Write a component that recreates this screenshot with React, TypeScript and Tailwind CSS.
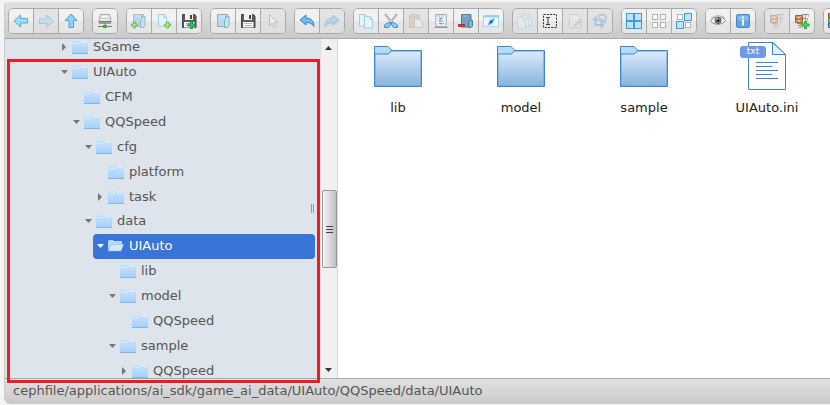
import type { ReactNode } from "react";

const Svg = ({ children }: { children: ReactNode }) => (
  <svg width="16" height="16" viewBox="0 0 16 16" fill="none" aria-hidden="true">
    {children}
  </svg>
);

const Plus = ({ x, y }: { x: number; y: number }) => (
  <path
    transform={`translate(${x} ${y})`}
    d="M2.500.500h2v2h2v2h-2v2h-2v-2h-2v-2h2z"
    fill="#b4e69c"
    stroke="#6cbb52"
  />
);

const Page = ({ x, y }: { x: number; y: number }) => (
  <path
    transform={`translate(${x} ${y})`}
    d="M.5.500h5.500l2.500 3v8.500h-8zM6 .5v3h2.500"
    fill="#e6f4fb"
    stroke="#a6cde0"
  />
);

const BookFolder = ({ light }: { light?: boolean }) => (
  <g>
    <path d="M2.500 1.500h10v12h-10z" fill={light ? "#b9dbee" : "#b9d6e4"} stroke={light ? "#7db4d2" : "#9cc1d3"} />
    <path d="M9.500 7.500l1-1V3.500h3.500v9l-1.500 2h-3z" fill={light ? "#c9e6f5" : "#c6dfea"} stroke={light ? "#74aecd" : "#8fb9cf"} />
    <path d="M4 3h5v3" stroke="#d9edf7" />
  </g>
);

const Floppy = () => (
  <g>
    <path d="M1.500 1.500h12l1.500 1.500v11.500h-13.500z" fill="#5b5b5b" stroke="#444" />
    <path d="M4 1h8v6H4z" fill="#f1f1f1" />
    <path d="M9 2h2v4H9z" fill="#444" />
    <path d="M3 9h10.500v5.500H3z" fill="#fafafa" />
    <path d="M4.500 10.500h7.500M4.500 12.500h7.500" stroke="#b5b5b5" />
  </g>
);

const Drawer = () => (
  <g>
    <path d="M1.500 2.500h7v7h-7z" fill="#d99a5f" stroke="#9a6335" />
    <path d="M2 6h6" stroke="#9a6335" />
    <path d="M4 4.500h2M4 8h2" stroke="#fff0d0" />
    <path d="M8 1.500h7M9 5.500h5M4 12.500h6M3 10.500h6" stroke="#8f8a80" />
    <path d="M11.500 2v9M6.500 11v3" stroke="#aca69b" />
    <path d="M14.500 1v3M13.500 5v3M4 14.500h5" stroke="#b9b4aa" />
  </g>
);

const Square = ({ x, y, on }: { x: number; y: number; on?: boolean }) => (
  <rect
    x={x}
    y={y}
    width={on ? 7 : 5}
    height={on ? 7 : 5}
    fill={on ? "#bfe3fb" : "#fff"}
    stroke={on ? "#3c9ce6" : "#b3b3b3"}
  />
);

const arrow = "M1 8l6.500-6v3.500H14.500v4.500H7.500v4z";

const icons: Record<string, ReactNode> = {
  Back: <path d={arrow} fill="#9fdcfb" stroke="#5aa9e0" />,
  Forward: <path d={arrow} transform="rotate(180 8 8)" fill="#9fdcfb" stroke="#4a9fdc" />,
  Up: <path d={arrow} transform="rotate(90 8 8)" fill="#8fd3fb" stroke="#4ba0e0" />,
  "Network volume": (
    <g>
      <path d="M3.500 1.500h9l1.500 6v2.500h-12V7.500z" fill="#e6e6e6" stroke="#a3a3a3" />
      <path d="M4 3.500h8" stroke="#f8f8f8" />
      <path d="M3.500 5.500h9" stroke="#cfcfcf" />
      <path d="M2 8.500h12M2 10h12" stroke="#777" />
      <path d="M8 10v3M1 13.500h14" stroke="#7a7a7a" />
      <path d="M6.500 12.500h3v2h-3z" fill="#58d046" stroke="#2f9a25" />
    </g>
  ),
  "New folder": (
    <g>
      <BookFolder />
      <Plus x={0} y={8.5} />
    </g>
  ),
  "New file": (
    <g>
      <Page x={2} y={1} />
      <Plus x={8} y={8.5} />
    </g>
  ),
  Upload: (
    <g>
      <Floppy />
      <path d="M9.500 8.500h2v2.500H14v2h-2.500v2.500h-2V13H7v-2h2.500z" fill="#35c465" stroke="#159545" />
    </g>
  ),
  Open: <BookFolder light />,
  Download: <Floppy />,
  "Get link": <path d="M4.500 1.500v11l2.500-2.500 2 4.500 2-1-2-4h3.500z" fill="#fff" stroke="#8b8b8b" />,
  Undo: <path d="M1 7l6-5v3c5 0 8 3 8 8.500-2-3-4-4-8-4V12z" fill="#6fbcf0" stroke="#2f82c8" />,
  Redo: <path d="M15 7L9 2v3c-5 0-8 3-8 8.500 2-3 4-4 8-4V12z" fill="#7cc4ee" stroke="#3d8dc0" />,
  Copy: (
    <g>
      <Page x={1} y={1} />
      <Page x={6} y={3} />
    </g>
  ),
  Cut: (
    <g>
      <path d="M2 1l8 10M14 1L6 11" stroke="#8d9398" strokeWidth="2" />
      <path d="M2 1l7 8M14 1L7 9" stroke="#d3d8dc" />
      <path d="M7.500 9.500l-3 .5-3 2v2.500h4l2-3zM8.500 9.500l3 .5 3 2v2.500h-4l-2-3z" fill="#92ccf4" stroke="#3b90d4" />
    </g>
  ),
  Paste: (
    <g>
      <path d="M1.500 2.500h10v12h-10z" fill="#e0b084" stroke="#c08d5c" />
      <path d="M4 1.500h5v2H4z" fill="#d4d4d4" stroke="#9c9c9c" />
      <path d="M6.500 6.500h5l3 3v5h-8z" fill="#f8f8f8" stroke="#a4a4a4" />
    </g>
  ),
  "Empty the folder": (
    <g>
      <path d="M2.500 1.500h11l-.5 12H3z" fill="#edf2f6" stroke="#a5adb3" />
      <path d="M1 14.500h14" stroke="#9c9c9c" />
      <path d="M4 3h8" stroke="#8a9299" strokeDasharray="1 1" />
      <path d="M6 5.500h3l-1-1M10 8H6l1.500-1.500M6 10.500h3l-1 1M10 10l1 1" stroke="#5598dc" />
    </g>
  ),
  Delete: (
    <g>
      <path d="M3.500 1.500h9.500v12.500h-9.500z" fill="#74a3c1" stroke="#527f9b" />
      <path d="M10.500 8.500l1-1h3v5.500l-1.500 1.500h-2.500z" fill="#8ab2cb" stroke="#4d7995" />
      <path d="M5 3h4" stroke="#9dc2d8" />
      <path d="M.5 11.500h6v2h-6z" fill="#df4545" stroke="#b8262e" />
    </g>
  ),
  Hide: (
    <g>
      <path d="M.5 2.500h15v11H.5z" fill="#eef7fd" stroke="#a8d4f3" />
      <path d="M1 3.500h14" stroke="#98cdf3" strokeWidth="2" />
      <circle cx="8" cy="9" r="3.500" fill="#d3eafa" />
      <path d="M12 5L9.500 10 4.500 12.500l2.500-5z" fill="#4a97da" />
      <path d="M7 8h2v2H7z" fill="#1f5f9c" />
    </g>
  ),
  Duplicate: (
    <g>
      <Page x={6} y={0.5} />
      <Page x={3} y={2} />
      <Page x={0} y={3.5} />
    </g>
  ),
  Rename: (
    <g>
      <path d="M1.500 1.500h13v13h-13z" stroke="#2e2e2e" strokeDasharray="2 1.250" />
      <path d="M4 4.500h1.500l.5.500.5-.5H8M6 5v6M4 11.500h4" stroke="#333" />
    </g>
  ),
  "Edit file": (
    <g>
      <path d="M2.500 1.500h8l3 3v10h-11z" fill="#e7f1f7" stroke="#96b9ca" />
      <path d="M14.500 7l-5 5-2 1 .5-2 5-5z" fill="#f3cf85" stroke="#c59243" />
    </g>
  ),
  "Resize and rotate": (
    <g>
      <path d="M3.500 3.500v8.500H12M.5 6.500h9V15" stroke="#5a9cc8" strokeWidth="2" />
      <path d="M6.500 4.500C7 .5 14 .5 14 5c0 2-1 3-2 3.500" stroke="#62abdf" strokeWidth="2" />
      <path d="M10 6v4.500h4.500z" fill="#62abdf" />
    </g>
  ),
  "Select all": (
    <g>
      <Square x={0.5} y={0.5} on />
      <Square x={8.5} y={0.5} on />
      <Square x={0.5} y={8.5} on />
      <Square x={8.5} y={8.5} on />
    </g>
  ),
  "Select none": (
    <g>
      <Square x={1.5} y={1.5} />
      <Square x={9.5} y={1.5} />
      <Square x={1.5} y={9.5} />
      <Square x={9.5} y={9.5} />
    </g>
  ),
  "Invert selection": (
    <g>
      <Square x={1.5} y={1.5} />
      <Square x={8.5} y={0.5} on />
      <Square x={0.5} y={8.5} on />
      <Square x={9.5} y={9.5} />
    </g>
  ),
  Preview: (
    <g>
      <path d="M.5 8C3 3.500 12 2.500 15.500 7.500 12 12.500 4 12.500.5 8z" fill="#f7f7f7" stroke="#888" />
      <path d="M1 5.500C5 2 11 2 15 5" stroke="#aaa" />
      <circle cx="8" cy="7.500" r="3" fill="#888" stroke="#555" />
      <circle cx="8" cy="7.500" r="1.500" fill="#1c1c1c" />
      <path d="M6 6h2" stroke="#ddd" />
    </g>
  ),
  "Get info": (
    <g>
      <rect x="1.500" y="1.500" width="13" height="13" rx="1.500" fill="#5fa5e0" stroke="#4488c8" />
      <path d="M2.500 2.500h11v5h-11z" fill="#80bbeb" />
      <path d="M7 3.500h2v2H7zM7 6.500h2v6H7z" fill="#fff" />
    </g>
  ),
  "Extract files": <Drawer />,
  "Create archive": (
    <g>
      <Drawer />
      <path d="M10.500 8.500h2V11H15v2h-2.500v2.500h-2V13H8v-2h2.500z" fill="#4fdb55" stroke="#25a935" />
    </g>
  ),
  Sort: (
    <g>
      <path d="M.5.500h9v4h-9z" fill="#e5925c" stroke="#8a4b22" />
      <path d="M.5 5.500h11v4h-11z" fill="#7fd07a" stroke="#3b8f37" />
      <path d="M.5 10.500h13v4h-13z" fill="#6aa5e8" stroke="#2c62a8" />
    </g>
  ),
};

const groups: string[][] = [
  ["Back", "Forward", "Up"],
  ["Network volume"],
  ["New folder", "New file", "Upload"],
  ["Open", "Download", "Get link"],
  ["Undo", "Redo"],
  ["Copy", "Cut", "Paste", "Empty the folder", "Delete", "Hide"],
  ["Duplicate", "Rename", "Edit file", "Resize and rotate"],
  ["Select all", "Select none", "Invert selection"],
  ["Preview", "Get info"],
  ["Extract files", "Create archive"],
  ["Sort"],
];

const disabled = new Set([
  "Forward",
  "Get link",
  "Redo",
  "Paste",
  "Duplicate",
  "Edit file",
  "Resize and rotate",
  "Extract files",
]);

const Toolbar = () => (
  <div
    role="toolbar"
    aria-label="File actions"
    className="flex shrink-0 gap-2 overflow-hidden rounded-tl border-b border-l border-b-[#aaa] border-l-[#ccc] bg-linear-to-b from-[#e1e1e1] to-[#cacaca] pt-1.5 pr-1 pb-1 pl-[3px]"
  >
    {groups.map((group) => (
      <div
        key={group[0]}
        className="flex shrink-0 divide-x divide-[#aaa] overflow-hidden rounded-[5px] border border-[#aaa]"
      >
        {group.map((name) => (
          <button
            key={name}
            type="button"
            title={name}
            aria-label={name}
            disabled={disabled.has(name)}
            className="box-content flex size-6 items-center justify-center bg-linear-to-b from-[#f1f1f1] from-50% to-[#e6e6e6] to-50% disabled:from-[#e3e3e3] disabled:to-[#dfdfdf] disabled:*:opacity-40"
          >
            <Svg>{icons[name]}</Svg>
          </button>
        ))}
      </div>
    ))}
  </div>
);

type Node = {
  name: string;
  pad: string;
  state?: "open" | "closed";
  selected?: boolean;
};

const tree: Node[] = [
  { name: "SGame", pad: "pl-[52px]", state: "closed" },
  { name: "UIAuto", pad: "pl-[52px]", state: "open" },
  { name: "CFM", pad: "pl-[64px]" },
  { name: "QQSpeed", pad: "pl-[64px]", state: "open" },
  { name: "cfg", pad: "pl-[76px]", state: "open" },
  { name: "platform", pad: "pl-[88px]" },
  { name: "task", pad: "pl-[88px]", state: "closed" },
  { name: "data", pad: "pl-[76px]", state: "open" },
  { name: "UIAuto", pad: "pl-[88px]", state: "open", selected: true },
  { name: "lib", pad: "pl-[100px]" },
  { name: "model", pad: "pl-[100px]", state: "open" },
  { name: "QQSpeed", pad: "pl-[112px]" },
  { name: "sample", pad: "pl-[100px]", state: "open" },
  { name: "QQSpeed", pad: "pl-[112px]", state: "closed" },
];

const TreeArrow = ({ state }: { state?: "open" | "closed" }) => (
  <svg width="7" height="8" viewBox="0 0 7 8" className="mr-1 shrink-0" aria-hidden="true">
    {state === "open" && <path d="M0 2h7L3.500 6z" fill="currentColor" />}
    {state === "closed" && <path d="M1 0v8l4-4z" fill="currentColor" />}
  </svg>
);

const TreeFolder = ({ open }: { open?: boolean }) => (
  <svg width="16" height="14" viewBox="0 0 16 14" className="mr-[5px] shrink-0" aria-hidden="true">
    <defs>
      <linearGradient id="leaf" x1="0" y1="0" x2="0" y2="1">
        <stop offset="0" stopColor="#c9e3fc" />
        <stop offset="1" stopColor="#a5d0f8" />
      </linearGradient>
    </defs>
    {open ? (
      <g>
        <path d="M0 12V2l1-1h4l1 1h8v4H4z" fill="#b4d6f8" />
        <path d="M3 5.500h12.500l-2.500 6.500H.5z" fill="#d5e8fb" stroke="#8dbbeb" strokeWidth="0.5" />
      </g>
    ) : (
      <g>
        <path d="M0 1.500L1 .5h5.500l1 1.500H16v11.500H0z" fill="url(#leaf)" />
        <path d="M0 13.500h16" stroke="#86b5df" />
        <path d="M1 3.500h6l1.500-1H15" stroke="#dceefe" />
      </g>
    )}
  </svg>
);

const Sidebar = () => (
  <nav aria-label="Folders" className="flex w-[334px] shrink-0 overflow-hidden border-l border-[#ccc] bg-[#dde4eb]">
    <ul className="-mt-1 grid h-[348px] flex-1 auto-rows-fr pr-[5px]">
      {tree.map((node, i) => (
        <li key={i} className={`flex ${node.pad}`}>
          <button
            type="button"
            aria-current={node.selected}
            className={`flex flex-1 items-center rounded pl-1 text-left ${
              node.selected ? "bg-[#3875d7] text-white" : "text-[#777]"
            }`}
          >
            <TreeArrow state={node.state} />
            <TreeFolder open={node.selected} />
            <span className={node.selected ? "text-white" : "text-[#555]"}>{node.name}</span>
          </button>
        </li>
      ))}
    </ul>
    <div className="flex w-[18px] shrink-0 flex-col items-center border-x border-l-[#e0e0e0] border-r-[#d8d8d8] bg-[#f0f0f0]">
      <svg width="16" height="17" viewBox="0 0 16 17" className="shrink-0" aria-hidden="true">
        <path d="M4 11l3.500-4 3.500 4z" fill="#333" />
      </svg>
      <div className="min-h-0 grow-134" />
      <div className="flex h-[78px] w-[15px] shrink-0 flex-col items-center justify-center gap-0.5 rounded-xs border border-[#979797] bg-linear-to-r from-[#f5f5f5] to-[#bfc0c4]">
        <span className="h-px w-[7px] bg-[#444]" />
        <span className="h-px w-[7px] bg-[#444]" />
        <span className="h-px w-[7px] bg-[#444]" />
      </div>
      <div className="min-h-0 grow-93" />
      <svg width="16" height="17" viewBox="0 0 16 17" className="shrink-0" aria-hidden="true">
        <path d="M4 7h7l-3.500 4z" fill="#333" />
      </svg>
    </div>
  </nav>
);

const FolderIcon = () => (
  <svg width="48" height="48" viewBox="0 0 48 48" aria-hidden="true">
    <defs>
      <linearGradient id="folder" x1="0" y1="0" x2="0" y2="1">
        <stop offset="0" stopColor="#dcecff" />
        <stop offset="1" stopColor="#88b2da" />
      </linearGradient>
    </defs>
    <path d="M.5 8.500h47v36H.5z" fill="url(#folder)" stroke="#4186c8" />
    <path d="M1.500 9.500h45v34h-45z" fill="none" stroke="#6ea8dc" strokeOpacity="0.6" />
    <path d="M.5 4.500h13.500l3.500 3.500v1l-3.500 3H.5z" fill="#b5dbfb" stroke="#4186c8" />
  </svg>
);

const TextFileIcon = () => (
  <span className="relative block size-12">
    <svg width="48" height="48" viewBox="0 0 48 48" aria-hidden="true">
      <path d="M5.500.500H30L42.500 12.500V47.500H5.500z" fill="#fff" stroke="#4186c8" />
      <path d="M29.500.500v12h13z" fill="#e1f0fd" stroke="#4186c8" />
      <path d="M13 20.500h22M13 24.500h16M13 28.500h22M13 32.500h16M13 36.500h22" stroke="#4186c8" />
    </svg>
    <span className="absolute top-1 -left-[3px] h-3 w-[26px] rounded-[3px] bg-[#6f9ae8] text-center text-[9px] leading-[11px] text-white">
      txt
    </span>
  </span>
);

const files = [
  { name: "lib", icon: <FolderIcon /> },
  { name: "model", icon: <FolderIcon /> },
  { name: "sample", icon: <FolderIcon /> },
  { name: "UIAuto.ini", icon: <TextFileIcon /> },
];

export default function App() {
  return (
    <div className="flex h-screen flex-col overflow-hidden bg-[#f5f5f5] pt-0.5 pb-px pl-1 font-['DejaVu_Sans',Verdana,sans-serif] text-[13px] leading-4">
      <Toolbar />
      <main className="relative flex min-h-0 flex-1">
        <Sidebar />
        <div className="absolute top-[165px] left-[307px] h-[9px] w-[3px] border-x border-[#999]" />
        <section
          aria-label="Files"
          className="flex min-w-0 flex-1 flex-wrap content-start gap-[3px] bg-white pt-[3px]"
        >
          {files.map((file) => (
            <button key={file.name} type="button" className="flex w-[120px] flex-col items-center gap-2.5 text-[#222]">
              {file.icon}
              <span>{file.name}</span>
            </button>
          ))}
        </section>
        <div className="pointer-events-none absolute top-5 left-[3px] z-10 h-[324px] w-[313px] border-3 border-[#ed1c24]" />
      </main>
      <footer className="shrink-0 rounded-bl-md border-t border-l border-t-[#aaa] border-l-[#ccc] bg-linear-to-b from-[#e1e1e1] to-[#cacaca] pt-1 pb-[5px] pl-2 whitespace-nowrap text-[#555]">
        cephfile/applications/ai_sdk/game_ai_data/UIAuto/QQSpeed/data/UIAuto
      </footer>
    </div>
  );
}
